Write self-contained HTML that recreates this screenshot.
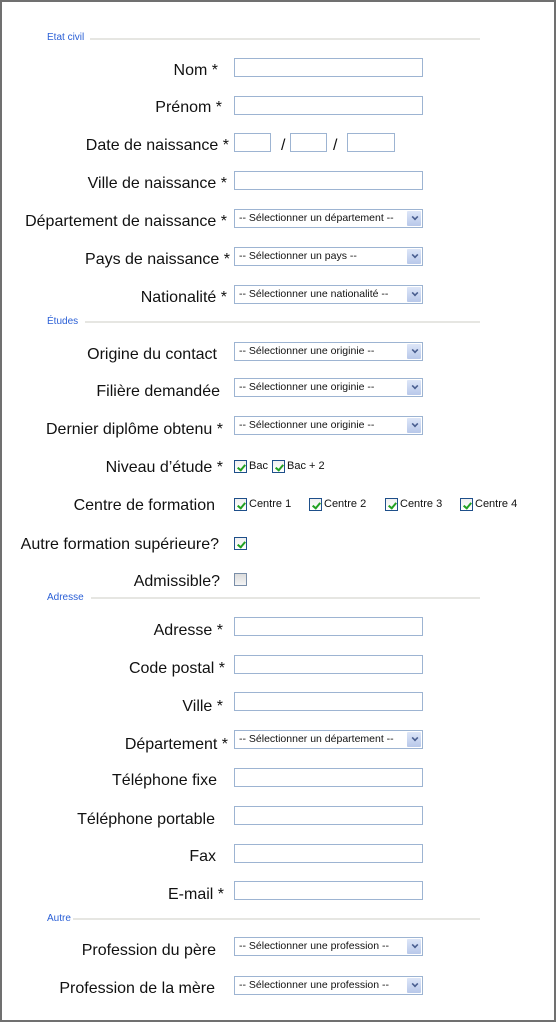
<!DOCTYPE html>
<html><head><meta charset="utf-8"><style>
*{margin:0;padding:0;box-sizing:border-box}
body{width:556px;height:1022px;position:relative;background:#fff;font-family:"Liberation Sans",Arial,sans-serif;overflow:hidden}
.frame{position:absolute;left:0;top:0;width:556px;height:1022px;border:2px solid #707070}
.h{position:absolute;left:47px;font-size:10px;color:#2a5fd6;line-height:12px}
.ln{position:absolute;height:2px;background:#e6e6e2;right:76px}
.l{position:absolute;font-size:16px;color:#111;line-height:18px;white-space:nowrap;text-align:right}
.i{position:absolute;left:234px;width:189px;height:19px;border:1px solid #9db4d2;background:#fff}
.s{position:absolute;left:234px;width:189px;height:19px;border:1px solid #9db4d2;background:#fff;font-size:10.5px;line-height:17px;padding-left:4px;color:#111;white-space:nowrap}
.s:after{content:"";position:absolute;right:1px;top:1px;width:14px;height:15px;background:linear-gradient(#dde6f8,#b8c8ea);border-radius:1px}
.s b{position:absolute;right:4px;top:4px;width:6px;height:6px;border-right:2px solid #4a5f90;border-bottom:2px solid #4a5f90;transform:rotate(45deg) scale(.8);z-index:2}
.c{position:absolute;width:13px;height:13px;border:1px solid #1e4f8a;background:linear-gradient(#f0f0f0,#fff)}
.c.k:after{content:"";position:absolute;left:4px;top:2px;width:3px;height:6px;border-right:2px solid #21a121;border-bottom:2px solid #21a121;transform:rotate(40deg)}
.c.u{border-color:#7a8ea8;background:linear-gradient(#dcdcdc,#f4f4f4)}
.t{position:absolute;font-size:11px;color:#111;line-height:13px;white-space:nowrap}
</style></head><body>
<div class="frame"></div>

<div class="h" style="top:32px">Etat civil</div><div class="ln" style="top:38px;left:90px"></div>
<div class="l" style="right:338px;top:62px">Nom *</div><div class="i" style="top:58px"></div>
<div class="l" style="right:334px;top:99px">Prénom *</div><div class="i" style="top:96px"></div>
<div class="l" style="right:327px;top:137px">Date de naissance *</div>
<div class="i" style="top:133px;width:37px"></div><div class="l" style="left:281px;top:137px">/</div>
<div class="i" style="top:133px;left:290px;width:37px"></div><div class="l" style="left:333px;top:137px">/</div>
<div class="i" style="top:133px;left:347px;width:48px"></div>
<div class="l" style="right:329px;top:175px">Ville de naissance *</div><div class="i" style="top:171px"></div>
<div class="l" style="right:329px;top:213px">Département de naissance *</div><div class="s" style="top:209px">-- Sélectionner un département --<b></b></div>
<div class="l" style="right:326px;top:251px">Pays de naissance *</div><div class="s" style="top:247px">-- Sélectionner un pays --<b></b></div>
<div class="l" style="right:329px;top:289px">Nationalité *</div><div class="s" style="top:285px">-- Sélectionner une nationalité --<b></b></div>

<div class="h" style="top:316px">Études</div><div class="ln" style="top:321px;left:85px"></div>
<div class="l" style="right:339px;top:346px">Origine du contact</div><div class="s" style="top:342px">-- Sélectionner une originie --<b></b></div>
<div class="l" style="right:336px;top:383px">Filière demandée</div><div class="s" style="top:378px">-- Sélectionner une originie --<b></b></div>
<div class="l" style="right:333px;top:421px">Dernier diplôme obtenu *</div><div class="s" style="top:416px">-- Sélectionner une originie --<b></b></div>
<div class="l" style="right:333px;top:459px">Niveau d’étude *</div>
<div class="c k" style="left:234px;top:460px"></div><div class="t" style="left:249px;top:460px">Bac</div>
<div class="c k" style="left:272px;top:460px"></div><div class="t" style="left:287px;top:460px">Bac + 2</div>
<div class="l" style="right:341px;top:497px">Centre de formation</div>
<div class="c k" style="left:234px;top:498px"></div><div class="t" style="left:249px;top:498px">Centre 1</div>
<div class="c k" style="left:309px;top:498px"></div><div class="t" style="left:324px;top:498px">Centre 2</div>
<div class="c k" style="left:385px;top:498px"></div><div class="t" style="left:400px;top:498px">Centre 3</div>
<div class="c k" style="left:460px;top:498px"></div><div class="t" style="left:475px;top:498px">Centre 4</div>
<div class="l" style="right:337px;top:536px">Autre formation supérieure?</div><div class="c k" style="left:234px;top:537px"></div>
<div class="l" style="right:336px;top:573px">Admissible?</div><div class="c u" style="left:234px;top:573px"></div>

<div class="h" style="top:592px">Adresse</div><div class="ln" style="top:597px;left:91px"></div>
<div class="l" style="right:333px;top:622px">Adresse *</div><div class="i" style="top:617px"></div>
<div class="l" style="right:331px;top:660px">Code postal *</div><div class="i" style="top:655px"></div>
<div class="l" style="right:333px;top:698px">Ville *</div><div class="i" style="top:692px"></div>
<div class="l" style="right:328px;top:736px">Département *</div><div class="s" style="top:730px">-- Sélectionner un département --<b></b></div>
<div class="l" style="right:339px;top:772px">Téléphone fixe</div><div class="i" style="top:768px"></div>
<div class="l" style="right:341px;top:811px">Téléphone portable</div><div class="i" style="top:806px"></div>
<div class="l" style="right:340px;top:848px">Fax</div><div class="i" style="top:844px"></div>
<div class="l" style="right:332px;top:886px">E-mail *</div><div class="i" style="top:881px"></div>

<div class="h" style="top:913px">Autre</div><div class="ln" style="top:918px;left:73px"></div>
<div class="l" style="right:340px;top:942px">Profession du père</div><div class="s" style="top:937px">-- Sélectionner une profession --<b></b></div>
<div class="l" style="right:341px;top:980px">Profession de la mère</div><div class="s" style="top:976px">-- Sélectionner une profession --<b></b></div>
</body></html>
